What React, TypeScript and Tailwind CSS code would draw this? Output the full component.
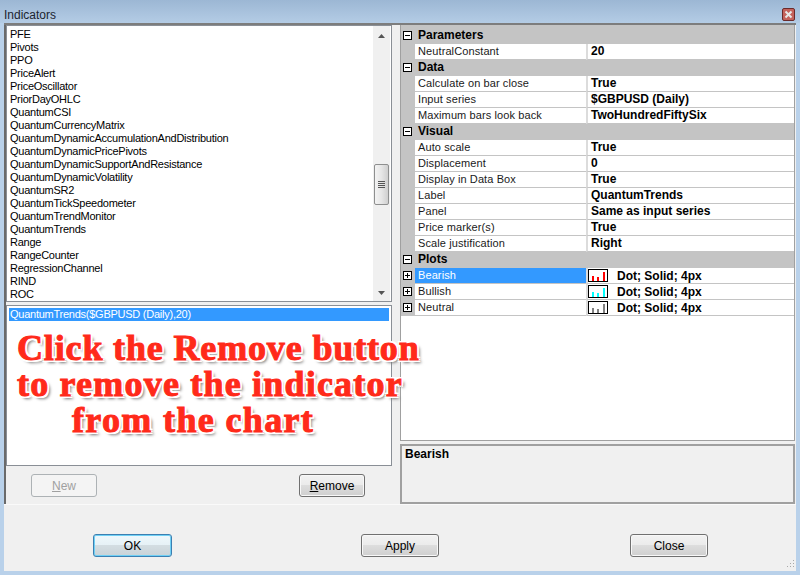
const indicators = [
  "PFE",
  "Pivots",
  "PPO",
  "PriceAlert",
  "PriceOscillator",
  "PriorDayOHLC",
  "QuantumCSI",
  "QuantumCurrencyMatrix",
  "QuantumDynamicAccumulationAndDistribution",
  "QuantumDynamicPricePivots",
  "QuantumDynamicSupportAndResistance",
  "QuantumDynamicVolatility",
  "QuantumSR2",
  "QuantumTickSpeedometer",
  "QuantumTrendMonitor",
  "QuantumTrends",
  "Range",
  "RangeCounter",
  "RegressionChannel",
  "RIND",
  "ROC",
];

const groups = [
  { name: "Parameters", rows: [["NeutralConstant", "20"]] },
  {
    name: "Data",
    rows: [
      ["Calculate on bar close", "True"],
      ["Input series", "$GBPUSD (Daily)"],
      ["Maximum bars look back", "TwoHundredFiftySix"],
    ],
  },
  {
    name: "Visual",
    rows: [
      ["Auto scale", "True"],
      ["Displacement", "0"],
      ["Display in Data Box", "True"],
      ["Label", "QuantumTrends"],
      ["Panel", "Same as input series"],
      ["Price marker(s)", "True"],
      ["Scale justification", "Right"],
    ],
  },
];

const plots = [
  { name: "Bearish", color: "#ff0000" },
  { name: "Bullish", color: "#00ffff" },
  { name: "Neutral", color: "#808080" },
];

function Expander({ open }: { open: boolean }) {
  return (
    <svg width="9" height="9" viewBox="0 0 9 9" className="shrink-0">
      <rect x="0.5" y="0.5" width="8" height="8" fill="#fff" stroke="#000" />
      <path d={open ? "M2 4.5h5" : "M2 4.5h5M4.5 2v5"} stroke="#000" />
    </svg>
  );
}

function PlotIcon({ color }: { color: string }) {
  return (
    <svg width="20" height="13" viewBox="0 0 20 13" className="shrink-0">
      <rect x="0.5" y="0.5" width="19" height="12" fill="#fff" stroke="#000" />
      <rect x="4" y="7" width="2" height="5" fill={color} />
      <rect x="9" y="8" width="2" height="4" fill={color} />
      <rect x="15" y="3" width="2" height="9" fill={color} />
    </svg>
  );
}

function ScrollArrow({ up }: { up: boolean }) {
  return (
    <svg width="7" height="4" viewBox="0 0 7 4">
      <path d={up ? "M3.5 0L7 4H0z" : "M0 0h7L3.5 4z"} fill="#555" />
    </svg>
  );
}

function DialogButton({
  children,
  width,
  variant = "normal",
}: {
  children: React.ReactNode;
  width: string;
  variant?: "normal" | "default" | "disabled";
}) {
  const look =
    variant === "disabled"
      ? "border-[#adb2b5] bg-[#f4f4f4] text-[#a0a0a0]"
      : variant === "default"
        ? "border-[#3c7fb1] bg-[linear-gradient(#eef8fc_0%,#e6f1f6_48%,#d3dde2_50%,#c9d3d8_100%)] shadow-[inset_0_0_0_1px_#6fd0f5] text-black"
        : "border-[#707070] bg-[linear-gradient(#f2f2f2_0%,#ebebeb_50%,#dddddd_50%,#cfcfcf_100%)] shadow-[inset_0_0_0_1px_#f8f8f8] text-black";
  return (
    <div className={`${width} h-[23px] flex items-center justify-center rounded-[3px] border text-[12px] ${look}`}>
      {children}
    </div>
  );
}

function GridRow({ label, value }: { label: string; value: string }) {
  return (
    <div className="flex h-4 bg-[#c4c4c4]">
      <div className="w-[14px] shrink-0" />
      <div className="w-[171px] shrink-0 bg-white border-b border-[#c4c4c4] pl-[3px] leading-[15px] text-[11px] tracking-[0.1px] text-[#1a1a1a]">
        {label}
      </div>
      <div className="flex-1 bg-white border-b border-l-2 border-[#c4c4c4] border-l-[#dcdcdc] pl-[3px] leading-[15px] font-bold text-black">
        {value}
      </div>
    </div>
  );
}

function GroupRow({ name }: { name: string }) {
  return (
    <div className="flex h-4 items-center bg-[#c4c4c4] pb-[2px]">
      <div className="w-[14px] shrink-0 flex justify-center pr-[1px]">
        <Expander open />
      </div>
      <span className="pl-[3px] font-bold text-black">{name}</span>
    </div>
  );
}

export default function App() {
  return (
    <div className="relative w-[800px] h-[575px] flex flex-col overflow-hidden bg-[#b9d1ea] font-['Liberation_Sans',Arial,sans-serif] text-[12px]">
      <div className="h-[23px] shrink-0 flex items-center justify-between pl-[4px] pr-[5px] bg-[linear-gradient(#9cb7d4,#b4cce5)]">
        <span className="text-[12px] text-[#1c2530] pt-[6px]">Indicators</span>
        <div className="mt-[5px] w-[13px] h-[13px] flex items-center justify-center rounded-[2px] border border-[#6b2a2a] bg-[#c4625c]">
          <svg width="9" height="9" viewBox="0 0 9 9">
            <path d="M1.5 1.5l6 6M7.5 1.5l-6 6" stroke="#e8e8e8" strokeWidth="2" />
          </svg>
        </div>
      </div>

      <div className="flex-1 mx-[4px] mb-[4px] flex flex-col bg-[#f0f0f0]">
        <div className="h-[482px] flex border-t-2 border-t-[#7d7d7d] border-b border-b-[#fafafa]">
          {/* left side */}
          <div className="w-[396px] shrink-0 flex flex-col border-l-2 border-l-[#6a6a6a] pr-[8px]">
            <div className="h-[277px] flex border border-[#8a8f96] bg-white">
              <div className="flex-1 pl-[3px] pt-[2px] text-[11px] tracking-[-0.25px] text-black">
                {indicators.map(name => (
                  <div key={name} className="h-[13px] leading-[13px] whitespace-nowrap">
                    {name}
                  </div>
                ))}
              </div>
              <div className="w-[17px] shrink-0 flex flex-col items-center bg-[#f0f0f0] pt-[8px] pb-[6px] mr-[1px]">
                <ScrollArrow up />
                <div className="mt-[126px] w-[15px] h-[41px] flex flex-col items-center justify-center gap-[1px] rounded-[2px] border border-[#8e8f8f] bg-[linear-gradient(90deg,#f3f3f3,#e6e6e6_50%,#cfcfcf)]">
                  <div className="w-[7px] h-[1px] bg-[#555]" />
                  <div className="w-[7px] h-[1px] bg-[#555]" />
                  <div className="w-[7px] h-[1px] bg-[#555]" />
                  <div className="w-[7px] h-[1px] bg-[#555]" />
                </div>
                <div className="flex-1" />
                <ScrollArrow up={false} />
              </div>
            </div>
            <div className="mt-[3px] h-[161px] border border-[#8a8f96] bg-white p-[2px]">
              <div className="h-[13px] leading-[13px] bg-[#3399ff] text-white text-[11px] tracking-[-0.25px] pl-[1px]">
                QuantumTrends($GBPUSD (Daily),20)
              </div>
            </div>
            <div className="flex-1 flex justify-between pt-[8px] pl-[25px] pr-[27px]">
              <DialogButton width="w-[66px]" variant="disabled">
                <span>
                  <u>N</u>ew
                </span>
              </DialogButton>
              <DialogButton width="w-[66px]">
                <span>
                  <u>R</u>emove
                </span>
              </DialogButton>
            </div>
          </div>

          {/* right side */}
          <div className="flex-1 flex flex-col pr-[1px]">
            <div className="h-[416px] flex flex-col border-x border-b border-[#a0a0a0] bg-white">
              <div className="h-[3px] bg-[#c4c4c4]" />
              {groups.map(group => (
                <div key={group.name}>
                  <GroupRow name={group.name} />
                  {group.rows.map(([label, value]) => (
                    <GridRow key={label} label={label} value={value} />
                  ))}
                </div>
              ))}
              <GroupRow name="Plots" />
              {plots.map((plot, i) => (
                <div key={plot.name} className="flex h-4 bg-[#c4c4c4]">
                  <div className="w-[14px] shrink-0 flex items-center justify-center pr-[1px] pb-[1px]">
                    <Expander open={false} />
                  </div>
                  <div
                    className={`w-[171px] shrink-0 border-b border-[#c4c4c4] pl-[3px] leading-[15px] text-[11px] tracking-[0.1px] ${
                      i === 0 ? "bg-[#3399ff] text-white" : "bg-white text-[#1a1a1a]"
                    }`}
                  >
                    {plot.name}
                  </div>
                  <div className="flex-1 flex items-center gap-[9px] bg-white border-b border-l-2 border-[#c4c4c4] border-l-[#dcdcdc] font-bold text-black">
                    <PlotIcon color={plot.color} />
                    <span>Dot; Solid; 4px</span>
                  </div>
                </div>
              ))}
            </div>
            <div className="mt-[3px] flex-1 border-2 border-[#a0a0a0] bg-[#f0f0f0] pl-[3px] leading-[13px] pt-[2px] font-bold text-black">
              Bearish
            </div>
          </div>
        </div>

        <div className="flex-1 relative flex items-start justify-between pt-[29px] pl-[89px] pr-[88px]">
          <DialogButton width="w-[79px]" variant="default">
            OK
          </DialogButton>
          <DialogButton width="w-[78px] mr-[2px]">Apply</DialogButton>
          <DialogButton width="w-[78px]">Close</DialogButton>
          <svg width="11" height="11" viewBox="0 0 11 11" className="absolute right-[1px] bottom-[1px]">
            <path d="M9 1h1v1H9zM6 4h1v1H6zM9 4h1v1H9zM3 7h1v1H3zM6 7h1v1H6zM9 7h1v1H9z" fill="#a8a8a8" />
          </svg>
        </div>
      </div>

      {/* callout lying over the lists */}
      <div className="absolute left-[17px] top-[330px] font-['Liberation_Serif',serif] font-bold text-[36px] leading-[36px] text-[#ff2a1a] whitespace-pre [-webkit-text-stroke:1px_#ff2a1a] [text-shadow:-2px_0_0_#fff,2px_0_0_#fff,0_-2px_0_#fff,0_2px_0_#fff,-2px_-2px_0_#fff,2px_-2px_0_#fff,-2px_2px_0_#fff,2px_2px_0_#fff,3px_3px_3px_#777]">
        <div className="tracking-[0.85px]">Click the Remove button</div>
        <div className="tracking-[1.2px]">to remove the indicator</div>
        <div className="pl-[55px] tracking-[1.35px]">from the chart</div>
      </div>
    </div>
  );
}
